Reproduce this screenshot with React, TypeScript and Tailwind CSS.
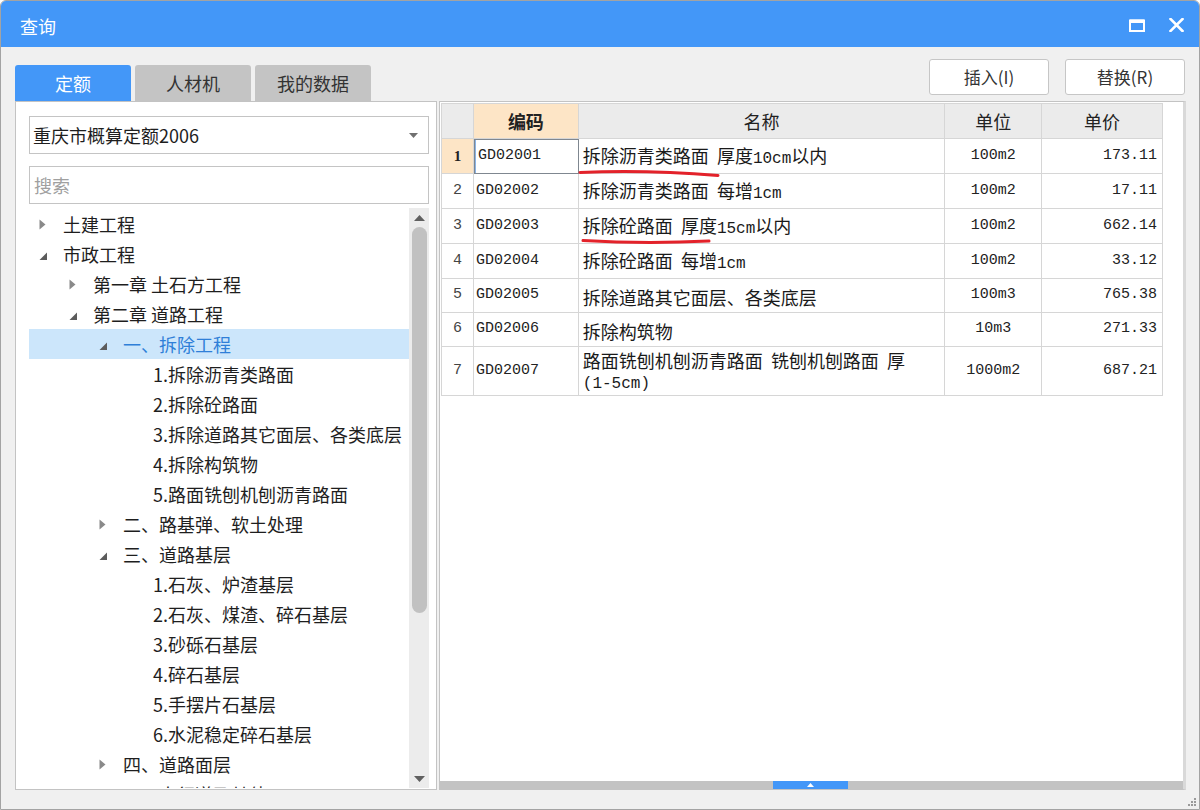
import React from "react";

type TreeNode = { label: string; level: number; state?: "open" | "closed"; selected?: boolean };

const tree: TreeNode[] = [
  { label: "土建工程", level: 0, state: "closed" },
  { label: "市政工程", level: 0, state: "open" },
  { label: "第一章 土石方工程", level: 1, state: "closed" },
  { label: "第二章 道路工程", level: 1, state: "open" },
  { label: "一、拆除工程", level: 2, state: "open", selected: true },
  { label: "1.拆除沥青类路面", level: 3 },
  { label: "2.拆除砼路面", level: 3 },
  { label: "3.拆除道路其它面层、各类底层", level: 3 },
  { label: "4.拆除构筑物", level: 3 },
  { label: "5.路面铣刨机刨沥青路面", level: 3 },
  { label: "二、路基弹、软土处理", level: 2, state: "closed" },
  { label: "三、道路基层", level: 2, state: "open" },
  { label: "1.石灰、炉渣基层", level: 3 },
  { label: "2.石灰、煤渣、碎石基层", level: 3 },
  { label: "3.砂砾石基层", level: 3 },
  { label: "4.碎石基层", level: 3 },
  { label: "5.手摆片石基层", level: 3 },
  { label: "6.水泥稳定碎石基层", level: 3 },
  { label: "四、道路面层", level: 2, state: "closed" },
  { label: "五、人行道及其他", level: 2, state: "closed" },
];

const indent = ["pl-[10px]", "pl-[40px]", "pl-[70px]", "pl-[100px]"];

type Row = { n: string; code: string; name: string[]; unit: string; price: string; h: string };

const rows: Row[] = [
  { n: "1", code: "GD02001", name: ["拆除沥青类路面  厚度10cm以内"], unit: "100m2", price: "173.11", h: "h-[35px]" },
  { n: "2", code: "GD02002", name: ["拆除沥青类路面  每增1cm"], unit: "100m2", price: "17.11", h: "h-[35px]" },
  { n: "3", code: "GD02003", name: ["拆除砼路面  厚度15cm以内"], unit: "100m2", price: "662.14", h: "h-[35px]" },
  { n: "4", code: "GD02004", name: ["拆除砼路面  每增1cm"], unit: "100m2", price: "33.12", h: "h-[35px]" },
  { n: "5", code: "GD02005", name: ["拆除道路其它面层、各类底层"], unit: "100m3", price: "765.38", h: "h-[34px]" },
  { n: "6", code: "GD02006", name: ["拆除构筑物"], unit: "10m3", price: "271.33", h: "h-[34px]" },
  { n: "7", code: "GD02007", name: ["路面铣刨机刨沥青路面  铣刨机刨路面  厚", "(1-5cm)"], unit: "1000m2", price: "687.21", h: "h-[49px]" },
];

function Mixed({ text }: { text: string }) {
  const parts = text.split(/([!-~]+)/);
  return (
    <>
      {parts.map((p, i) =>
        /^[!-~]+$/.test(p) ? (
          <span key={i} className="font-['Liberation_Mono',monospace] text-[16px]">
            {p}
          </span>
        ) : (
          <span key={i} className="whitespace-pre">{p}</span>
        )
      )}
    </>
  );
}

function Tri({ state }: { state?: "open" | "closed" }) {
  if (state === "closed")
    return (
      <svg width="7" height="11" viewBox="0 0 7 11">
        <path d="M0.5 0.5 L6.5 5.5 L0.5 10.5 Z" fill="#8a8a8a" />
      </svg>
    );
  if (state === "open")
    return (
      <svg width="9" height="9" viewBox="0 0 9 9" className="mt-[4px]">
        <path d="M8 0.5 L8 8 L0.5 8 Z" fill="#5c5c5c" />
      </svg>
    );
  return null;
}

export default function App() {
  return (
    <div className="relative w-[1200px] h-[810px] bg-[#f0f0f0] border border-[#a3a3a3] rounded-t-[6px] overflow-hidden flex flex-col font-['Noto_Sans_CJK_SC',sans-serif] text-[#1e1e1e]">
      {/* Title bar */}
      <div className="h-[46px] shrink-0 bg-[#4397f8] flex items-center justify-between pl-[19px] pr-[15px]">
        <span className="text-white text-[18px] leading-[24px] mt-[3px]">查询</span>
        <div className="flex items-center gap-[24px] mt-[2px]">
          <svg width="16" height="13" viewBox="0 0 16 13">
            <rect x="1" y="1.5" width="14" height="10.5" fill="none" stroke="#fff" strokeWidth="2" />
            <rect x="1" y="0.5" width="14" height="3.5" fill="#fff" />
          </svg>
          <svg width="15" height="14" viewBox="0 0 15 14">
            <path d="M1.5 1 L13.5 13 M13.5 1 L1.5 13" stroke="#fff" strokeWidth="2.6" strokeLinecap="square" />
          </svg>
        </div>
      </div>

      {/* Tabs + buttons */}
      <div className="h-[54px] shrink-0 flex justify-between pl-[14px] pr-[14px]">
        <div className="self-end flex gap-[4px]">
          <div className="w-[116px] h-[36px] rounded-t-[3px] bg-[#4397f8] text-white text-[18px] flex items-center justify-center">定额</div>
          <div className="w-[116px] h-[36px] rounded-t-[3px] bg-[#c4c4c4] text-[#333] text-[18px] flex items-center justify-center">人材机</div>
          <div className="w-[116px] h-[36px] rounded-t-[3px] bg-[#c4c4c4] text-[#333] text-[18px] flex items-center justify-center">我的数据</div>
        </div>
        <div className="mt-[12px] flex gap-[16px]">
          <div className="w-[120px] h-[36px] bg-white border border-[#c6c6c6] rounded-[3px] text-[17px] text-[#333] flex items-center justify-center">插入(I)</div>
          <div className="w-[120px] h-[36px] bg-white border border-[#c6c6c6] rounded-[3px] text-[17px] text-[#333] flex items-center justify-center">替换(R)</div>
        </div>
      </div>

      {/* Main */}
      <div className="h-[689px] shrink-0 flex gap-[2px] pl-[14px]">
        {/* Left panel */}
        <div className="w-[422px] bg-white border border-[#c3c3c3] flex flex-col pl-[13px] pr-[7px]">
          <div className="mt-[14px] h-[38px] w-[400px] border border-[#c4c4c4] flex items-center justify-between pl-[3px] pr-[10px]">
            <span className="text-[18px] leading-[24px]">重庆市概算定额2006</span>
            <svg width="9" height="5" viewBox="0 0 9 5">
              <path d="M0 0 L9 0 L4.5 5 Z" fill="#707070" />
            </svg>
          </div>
          <div className="mt-[12px] h-[38px] w-[400px] border border-[#c4c4c4] flex items-center pl-[4px]">
            <span className="text-[18px] leading-[24px] text-[#a0a0a0]">搜索</span>
          </div>
          <div className="mt-[4px] flex-1 min-h-0 flex mb-[1px]">
            <div className="w-[380px] overflow-hidden pt-[1px]">
              {tree.map((t, i) => (
                <div
                  key={i}
                  className={`h-[30px] flex items-center ${indent[t.level]} ${t.selected ? "bg-[#cce6fb]" : ""}`}
                >
                  <div className="w-[24px] shrink-0 flex items-center">
                    <Tri state={t.state} />
                  </div>
                  <span className={`text-[18px] leading-[30px] whitespace-nowrap ${t.selected ? "text-[#2f7fd8]" : ""}`}>{t.label}</span>
                </div>
              ))}
            </div>
            <div className="w-[20px] bg-[#ececec] flex flex-col items-center">
              <div className="h-[19px] w-full flex items-center justify-center">
                <svg width="11" height="6" viewBox="0 0 11 6">
                  <path d="M0 6 L11 6 L5.5 0 Z" fill="#606060" />
                </svg>
              </div>
              <div className="h-[386px] w-[15px] rounded-full bg-[#c1c1c1]" />
              <div className="flex-1" />
              <div className="h-[19px] w-full flex items-center justify-center">
                <svg width="11" height="6" viewBox="0 0 11 6">
                  <path d="M0 0 L11 0 L5.5 6 Z" fill="#606060" />
                </svg>
              </div>
            </div>
          </div>
        </div>

        {/* Right panel */}
        <div className="w-[747px] bg-white border border-[#c3c3c3] border-r-[3px] border-r-[#d9d9d9] flex flex-col">
          <div className="relative flex-1 pt-[1px] pl-[1px]">
            <div className="w-[722px] border-t border-l border-[#d6d6d6]">
              {/* header */}
              <div className="flex h-[35px] text-[18px] text-[#222]">
                <div className="w-[32px] border-r border-b border-[#d6d6d6] bg-[#ebebeb]" />
                <div className="w-[105px] border-r border-b border-[#d6d6d6] bg-[#fde5c6] flex items-center justify-center font-bold">编码</div>
                <div className="w-[367px] border-r border-b border-[#d6d6d6] bg-[#ebebeb] flex items-center justify-center">名称</div>
                <div className="w-[97px] border-r border-b border-[#d6d6d6] bg-[#ebebeb] flex items-center justify-center">单位</div>
                <div className="w-[121px] border-r border-b border-[#d6d6d6] bg-[#ebebeb] flex items-center justify-center">单价</div>
              </div>
              {rows.map((r, i) => (
                <div key={i} className={`flex ${r.h}`}>
                  <div
                    className={`w-[32px] border-r border-b border-[#d6d6d6] flex items-center justify-center text-[15px] ${
                      i === 0
                        ? "bg-[#fde5c6] font-['Liberation_Serif',serif] font-bold text-[#222]"
                        : "bg-white font-['Liberation_Mono',monospace] text-[#444]"
                    }`}
                  >
                    {r.n}
                  </div>
                  <div
                    className={`w-[105px] border-r border-b border-[#d6d6d6] flex items-center pl-[2px] font-['Liberation_Mono',monospace] text-[15px] text-[#222] ${
                      i === 0 ? "outline outline-1 outline-[#7f8790] -outline-offset-1 border-l-2 border-l-[#8ab4e6]" : ""
                    }`}
                  >
                    {r.code}
                  </div>
                  <div className="w-[367px] border-r border-b border-[#d6d6d6] flex flex-col justify-center pl-[4px] pt-[2px] text-[18px] text-[#1a1a1a]">
                    {r.name.map((l, j) => (
                      <div key={j} className="leading-[20px] whitespace-nowrap">
                        <Mixed text={l} />
                      </div>
                    ))}
                  </div>
                  <div className="w-[97px] border-r border-b border-[#d6d6d6] flex items-center justify-center font-['Liberation_Mono',monospace] text-[15px] text-[#222]">
                    {r.unit}
                  </div>
                  <div className="w-[121px] border-r border-b border-[#d6d6d6] flex items-center justify-end pr-[5px] font-['Liberation_Mono',monospace] text-[15px] text-[#222]">
                    {r.price}
                  </div>
                </div>
              ))}
            </div>
            {/* red annotation underlines */}
            <svg className="absolute left-0 top-0 pointer-events-none" width="400" height="160" viewBox="0 0 400 160">
              <path d="M140 70.5 Q 205 67.5 278 73.5" fill="none" stroke="#e3222a" strokeWidth="3" strokeLinecap="round" />
              <path d="M143 138.5 Q 205 142 269 139" fill="none" stroke="#e3222a" strokeWidth="3" strokeLinecap="round" />
            </svg>
          </div>
          <div className="h-[8px] bg-[#c3c3c3] flex">
            <div className="ml-[333px] w-[75px] h-[8px] bg-[#4397f8] flex items-center justify-center">
              <svg width="7" height="4" viewBox="0 0 7 4">
                <path d="M0 4 L7 4 L3.5 0 Z" fill="#fff" />
              </svg>
            </div>
          </div>
        </div>
      </div>

      {/* resize grip */}
      <div className="absolute right-[3px] bottom-[3px] flex flex-col items-end gap-[1px]">
        <div className="flex gap-[1px]">
          <div className="w-[2px] h-[2px] bg-[#9a9a9a]" />
        </div>
        <div className="flex gap-[1px]">
          <div className="w-[2px] h-[2px] bg-[#9a9a9a]" />
          <div className="w-[2px] h-[2px] bg-[#9a9a9a]" />
        </div>
        <div className="flex gap-[1px]">
          <div className="w-[2px] h-[2px] bg-[#9a9a9a]" />
          <div className="w-[2px] h-[2px] bg-[#9a9a9a]" />
          <div className="w-[2px] h-[2px] bg-[#9a9a9a]" />
        </div>
      </div>
    </div>
  );
}
